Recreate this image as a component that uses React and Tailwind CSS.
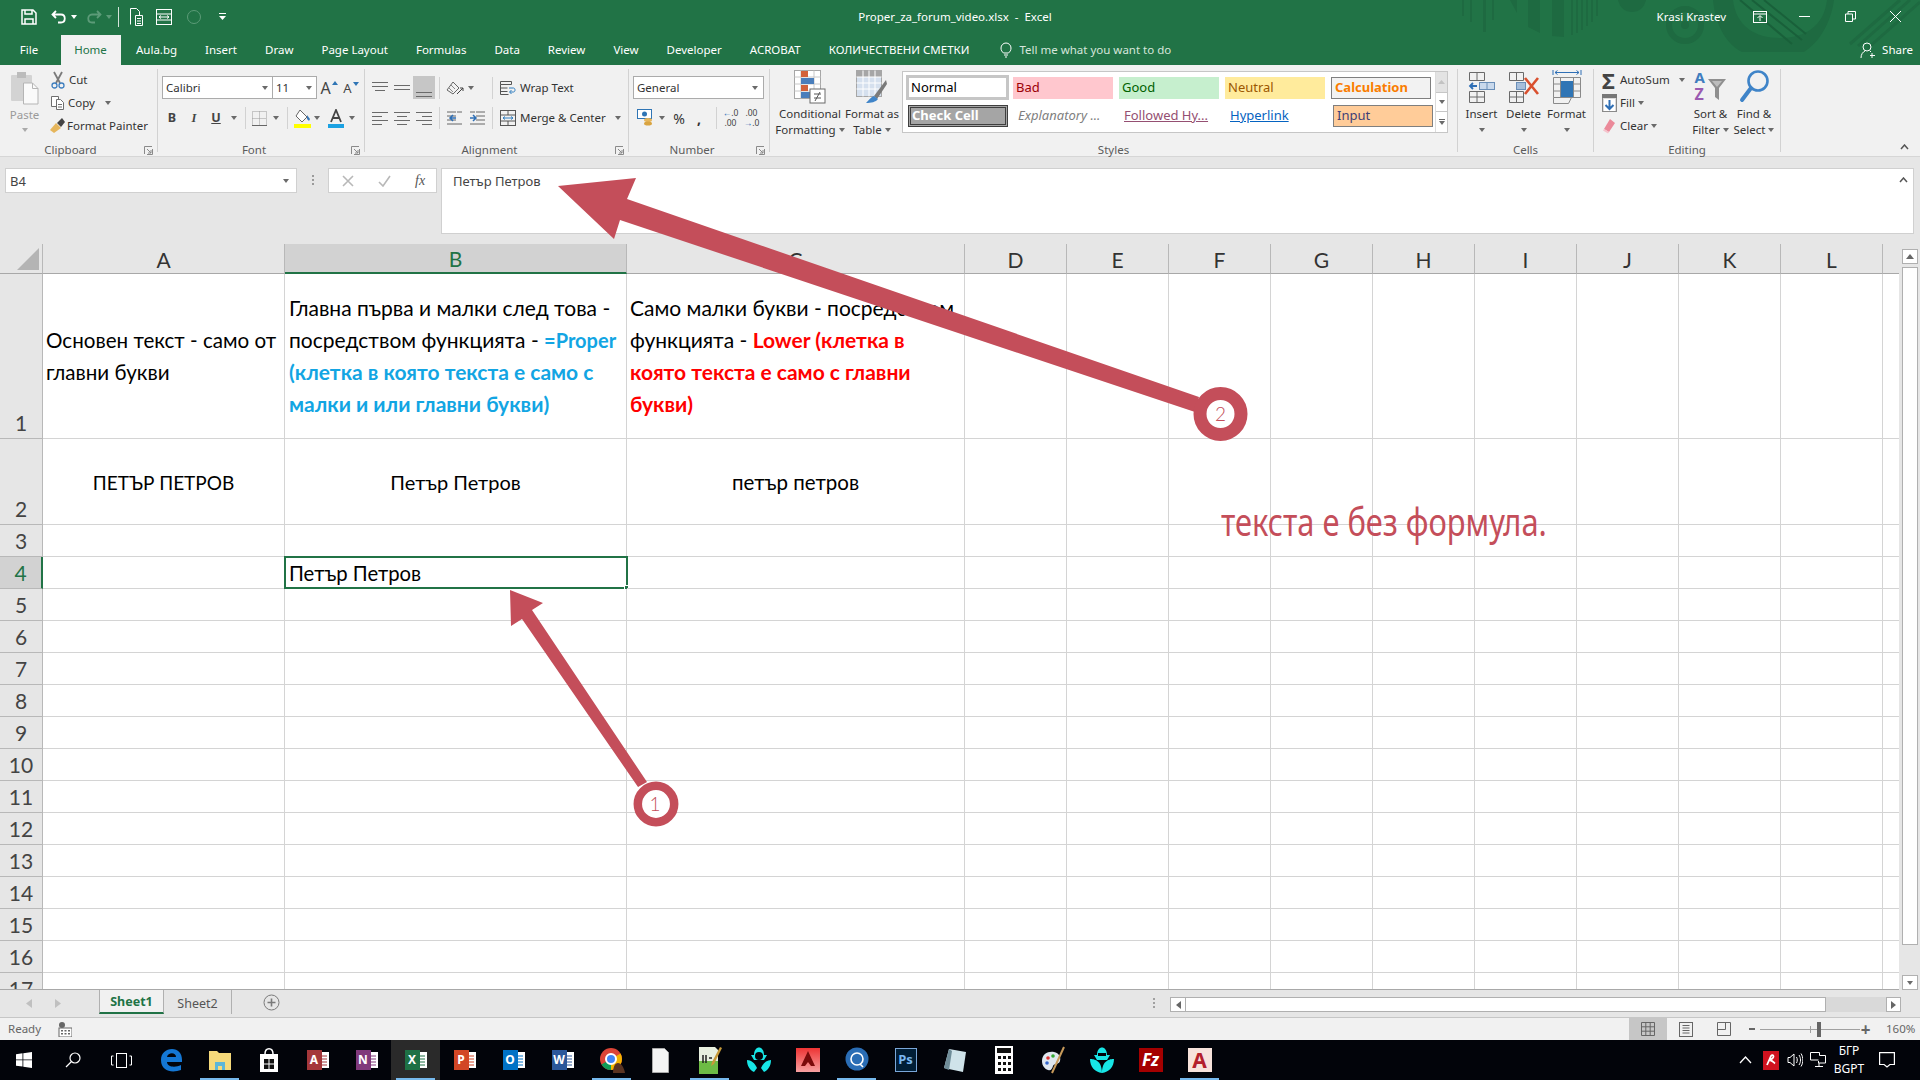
import React from 'react';

const GRID_COLS = ['w-[242px]', 'w-[342px]', 'w-[338px]', 'w-[102px]', 'w-[102px]', 'w-[102px]', 'w-[102px]', 'w-[102px]', 'w-[102px]', 'w-[102px]', 'w-[102px]', 'w-[102px]', 'w-[16px]'];
const COL_LABELS = ['A', 'B', 'C', 'D', 'E', 'F', 'G', 'H', 'I', 'J', 'K', 'L', ''];

const Caret = ({ c = '#6a6a6a' }) => (
  <svg width="6" height="4" viewBox="0 0 6 4" className="shrink-0"><path d="M0 0h6L3 4z" fill={c} /></svg>
);

const Launcher = () => (
  <svg width="9" height="9" viewBox="0 0 9 9" className="shrink-0">
    <path d="M.5 8V.5H8M8.5 3v5.5H3" fill="none" stroke="#8a8a8a" />
    <path d="M3 3l4 4M7 4v3H4" fill="none" stroke="#8a8a8a" />
  </svg>
);

const GroupSep = () => <div className="w-px my-[4px] bg-[#d2d2d2] shrink-0" />;
const MiniSep = () => <div className="w-px h-[22px] bg-[#d2d2d2] shrink-0" />;

function Group({ w, label, launcher, children }) {
  return (
    <div className={`${w} shrink-0 flex flex-col h-full`}>
      <div className="h-[76px] shrink-0">{children}</div>
      <div className="relative flex-1 flex items-center justify-center text-[#5b5b5b] text-[11.5px] pb-[4px]">
        {label}
        {launcher && <span className="absolute right-[4px] top-[5px]"><Launcher /></span>}
      </div>
    </div>
  );
}

// ----- ribbon drawings
const PasteIcon = () => (
  <svg width="30" height="34" viewBox="0 0 30 34">
    <rect x="1" y="4" width="21" height="26" rx="1" fill="#d3d3d3" />
    <rect x="7" y="1" width="9" height="6" fill="#bcbcbc" />
    <path d="M13.500 12h9l5.500 5.500V33h-14.500z" fill="#fafafa" stroke="#b5b5b5" />
    <path d="M22.500 12v5.500H28" fill="none" stroke="#b5b5b5" />
  </svg>
);
const CutIcon = () => (
  <svg width="16" height="18" viewBox="0 0 16 18" fill="none">
    <path d="M4 1l6 11M12 1L6 12" stroke="#7a7a7a" strokeWidth="1.800" />
    <circle cx="4.500" cy="14.500" r="2.500" stroke="#3f7fbf" strokeWidth="1.300" />
    <circle cx="11.500" cy="14.500" r="2.500" stroke="#3f7fbf" strokeWidth="1.300" />
  </svg>
);
const CopyIcon = () => (
  <svg width="15" height="15" viewBox="0 0 15 15" fill="#fff" stroke="#6e6e6e">
    <path d="M1.500 1.500h7v10h-7z" />
    <path d="M6.500 4.500h4l3 3v7h-7z" />
    <path d="M8 9.500h4M8 12h4" />
  </svg>
);
const PainterIcon = () => (
  <svg width="17" height="17" viewBox="0 0 17 17">
    <path d="M1 13l6-7 5 5-7 5z" fill="#e6b65c" />
    <path d="M8 6l4 4 4-5-3-4z" fill="#444" />
  </svg>
);
const Lines = ({ rows }) => (
  <svg width="16" height="14" viewBox="0 0 16 14" stroke="#6a6a6a" strokeWidth="1">
    {rows.map((r, i) => <path key={i} d={r} />)}
  </svg>
);
const OrientIcon = () => (
  <svg width="18" height="16" viewBox="0 0 18 16" fill="none" stroke="#666">
    <path d="M1 10l6-8 6 6-6 6z" />
    <path d="M3 8l4 4M5 5l4 4" stroke="#888" />
    <path d="M11 14l6-6M17 8h-3M17 8v3" stroke="#444" />
  </svg>
);
const WrapIcon = () => (
  <svg width="16" height="16" viewBox="0 0 16 16" fill="none" stroke="#555">
    <path d="M.5 1.500h11v3h-11zM.5 4.500v10h8M.5 8h7M.5 11.500h7" />
    <path d="M9 8h4.500c2 0 2 4 0 4H10M11.500 10l-2 2 2 2" stroke="#2f7dbf" />
  </svg>
);
const MergeIcon = () => (
  <svg width="16" height="16" viewBox="0 0 16 16" fill="none" stroke="#555">
    <rect x=".5" y=".5" width="15" height="15" />
    <path d="M.5 5h15M.5 11h15M8 .5V5M8 11v4.500" />
    <path d="M3 8h10M5 6.500L3 8l2 1.500M11 6.500L13 8l-2 1.500" stroke="#2f7dbf" />
  </svg>
);
const IndentIcon = ({ flip }) => (
  <svg width="16" height="14" viewBox="0 0 16 14" fill="none">
    <path d="M7 1h9M7 5h9M7 9h9M1 13h15M1 1h5" stroke="#666" transform={flip ? 'translate(16,0) scale(-1,1)' : undefined} />
    <path d={flip ? 'M9 7h-6M6 4L3 7l3 3' : 'M7 7H1M4 4l3 3-3 3'} stroke="#2f6fb5" strokeWidth="1.500" />
  </svg>
);
const BorderIcon = () => (
  <svg width="15" height="15" viewBox="0 0 15 15" fill="none" stroke="#9a9a9a" strokeDasharray="1 1">
    <path d="M.5.5h14v14H.5zM7.500 .5v14M.5 7.500h14" />
    <path d="M0 14.500h15" stroke="#666" strokeDasharray="0" />
  </svg>
);
const FillIcon = () => (
  <svg width="17" height="19" viewBox="0 0 17 19">
    <path d="M6 1l7 7-5 5-6-6z" fill="#fff" stroke="#666" />
    <path d="M13 6l3 4-1 2-2-2z" fill="#3a78b8" />
    <rect x="0" y="15" width="17" height="4" fill="#ffff00" />
  </svg>
);
const FontColorIcon = () => (
  <svg width="16" height="19" viewBox="0 0 16 19">
    <path d="M3 13L8 1l5 12M5 9h6" fill="none" stroke="#444" strokeWidth="1.800" />
    <rect x="0" y="15" width="16" height="4" fill="#1ba1e2" />
  </svg>
);
const CurrencyIcon = () => (
  <svg width="17" height="18" viewBox="0 0 17 18">
    <rect x=".5" y=".5" width="14" height="9" fill="#fff" stroke="#2f75b5" />
    <circle cx="7.500" cy="5" r="2.500" fill="#2f75b5" />
    <ellipse cx="11" cy="11" rx="4" ry="2" fill="#e6b65c" />
    <ellipse cx="11" cy="14.500" rx="4" ry="2" fill="#d9a441" />
  </svg>
);
const CondIcon = () => (
  <svg width="32" height="34" viewBox="0 0 32 34">
    <rect x=".5" y=".5" width="26" height="28" fill="#fff" stroke="#a6a6a6" />
    <path d="M7 .5v28M20 .5v28M.5 7h26M.5 14h26M.5 21h26" stroke="#c8c8c8" />
    <rect x="7" y="1" width="7" height="6" fill="#d2623a" />
    <rect x="7" y="8" width="13" height="6" fill="#4a7ebb" />
    <rect x="7" y="15" width="7" height="6" fill="#d2623a" />
    <rect x="7" y="22" width="10" height="6" fill="#4a7ebb" />
    <rect x="16" y="19" width="15" height="14" fill="#fff" stroke="#6a6a6a" />
    <path d="M20 24h7M20 28h7M26 22l-5 9" stroke="#555" />
  </svg>
);
const TableIcon = () => (
  <svg width="32" height="34" viewBox="0 0 32 34">
    <rect x=".5" y=".5" width="25" height="26" fill="#d5e0ee" stroke="#a6a6a6" />
    <rect x="1" y="1" width="24" height="6" fill="#a6a6a6" />
    <path d="M7 .5v26M13 .5v26M19 .5v26M.5 7h25M.5 13h25M.5 19h25" stroke="#fff" />
    <path d="M30 10L18 26l3 3 10-15z" fill="#7a7a7a" />
    <path d="M18 26c-3 1-5 4-8 7 5 0 10-1 12-4z" fill="#3f84c8" />
  </svg>
);
const InsertCellsIcon = () => (
  <svg width="28" height="34" viewBox="0 0 28 34" fill="none" stroke="#6a6a6a">
    <path d="M1.500 2.500h15v8h-15zM9 2.500v8M1.500 21.500h15v11h-15zM9 21.500v11M1.500 27h15" />
    <rect x="11.500" y="12.500" width="15" height="7" fill="#c9d9ec" stroke="#6a8fb8" />
    <path d="M19 12.500v7" stroke="#6a8fb8" />
    <path d="M9 16H2M5 13l-3 3 3 3" stroke="#2f6fb5" strokeWidth="1.800" />
  </svg>
);
const DeleteCellsIcon = () => (
  <svg width="32" height="34" viewBox="0 0 32 34" fill="none" stroke="#6a6a6a">
    <path d="M1.500 2.500h14v8h-14zM8.500 2.500v8M1.500 21.500h14v11h-14zM8.500 21.500v11M1.500 27h14" />
    <rect x="8.500" y="12.500" width="9" height="7" fill="#a6bedb" stroke="#6a8fb8" />
    <path d="M17 8l13 16M30 8L17 24" stroke="#d9502e" strokeWidth="2.600" />
  </svg>
);
const FormatCellsIcon = () => (
  <svg width="30" height="36" viewBox="0 0 30 36" fill="none" stroke="#6a6a6a">
    <path d="M1 1v5M29 1v5M3 3.500h24M3 3.500l2.500-2M3 3.500l2.500 2M27 3.500l-2.500-2M27 3.500l-2.500 2" stroke="#2f6fb5" />
    <path d="M1.500 8.500h27v20h-27zM8.500 8.500v20M21.500 8.500v20M1.500 15h27M1.500 22h27" stroke="#8a8a8a" />
    <rect x="9" y="12" width="12" height="16" fill="#2f75b5" stroke="none" />
    <path d="M1.500 28.500v6h15l3-6" stroke="#8a8a8a" />
  </svg>
);
const FillDownIcon = () => (
  <svg width="15" height="18" viewBox="0 0 15 18">
    <rect x=".5" y=".5" width="14" height="17" fill="#dcdcdc" stroke="#8a8a8a" />
    <rect x="0" y="0" width="15" height="4" fill="#777" />
    <rect x="2" y="5" width="11" height="12" fill="#fff" />
    <path d="M7.500 6v9M3.500 11l4 4 4-4" fill="none" stroke="#2f6fb5" strokeWidth="2" />
  </svg>
);
const EraserIcon = () => (
  <svg width="14" height="16" viewBox="0 0 14 16">
    <path d="M8 1l5 4-6 9-5-3z" fill="#eb8a9a" />
    <path d="M2 11l5 3-1 1.500-5-3z" fill="#f6c3cc" />
  </svg>
);
const SortIcon = () => (
  <div className="w-[32px] h-[36px] flex font-bold leading-[17px]">
    <div className="w-[12px] flex flex-col items-start">
      <span className="text-[15px] text-[#3f7dbf]">A</span>
      <span className="text-[16px] text-[#9a5ab0]">Z</span>
    </div>
    <svg className="mt-[9px]" width="20" height="22" viewBox="0 0 20 22">
      <path d="M1 1h18l-7 9v12l-4-3v-9z" fill="#8f8f8f" />
      <path d="M5 3h10l-5 6z" fill="#bdbdbd" />
    </svg>
  </div>
);
const FindIcon = () => (
  <svg width="30" height="36" viewBox="0 0 30 36" fill="none">
    <circle cx="19" cy="12" r="9.500" stroke="#3f84c8" strokeWidth="2.600" />
    <path d="M12 19L3 31" stroke="#3f84c8" strokeWidth="4" strokeLinecap="round" />
  </svg>
);

function TopButton({ w, lines, caretOnLine, children }) {
  return (
    <div className={`${w} shrink-0 flex flex-col items-center`}>
      <div className="h-[38px] flex items-center justify-center">{children}</div>
      <div className="flex items-center gap-[3px] h-[16px] whitespace-nowrap">{lines[0]}{caretOnLine === 0 && <Caret />}</div>
      <div className="flex items-center gap-[3px] h-[16px] whitespace-nowrap">{lines[1]}{caretOnLine === 1 && <Caret />}</div>
    </div>
  );
}

function StyleCell({ className, children }) {
  return <div className={`w-[100px] h-[22px] shrink-0 flex items-center pl-[3px] text-[13px] whitespace-nowrap ${className}`}>{children}</div>;
}

function Ribbon() {
  return (
    <div className="h-[92px] shrink-0 bg-[#f1f1f1] border-b border-[#d6d6d6] flex text-[#333] text-[11.500px]">
      <Group w="w-[157px]" label={<span className="mr-[16px]">Clipboard</span>} launcher>
        <div className="flex">
          <div className="w-[50px] flex flex-col items-center pt-[6px] pr-[1px]">
            <PasteIcon />
            <span className="text-[#9a9a9a] mt-[2px] leading-[16px]">Paste</span>
            <span className="mt-[5px]"><Caret c="#aaa" /></span>
          </div>
          <div className="flex flex-col pt-[3px]">
            <div className="h-[23px] flex items-center gap-[3px]"><CutIcon />Cut</div>
            <div className="h-[23px] flex items-center gap-[3px]"><CopyIcon />Copy<span className="ml-[7px]"><Caret /></span></div>
            <div className="h-[23px] flex items-center gap-[1px] ml-[-1px] whitespace-nowrap"><PainterIcon />Format Painter</div>
          </div>
        </div>
      </Group>
      <GroupSep />
      <Group w="w-[206px]" label={<span className="mr-[14px]">Font</span>} launcher>
        <div className="pt-[11px]">
          <div className="flex items-center h-[23px] pl-[4px]">
            <div className="w-[111px] h-[23px] bg-white border border-[#ababab] flex items-center justify-between pl-[3px] pr-[4px]">Calibri<Caret /></div>
            <div className="w-[44px] h-[23px] bg-white border border-l-0 border-[#ababab] flex items-center justify-between pl-[3px] pr-[4px]">11<Caret /></div>
            <div className="w-[22px] ml-[1px] flex items-start justify-center text-[16px] text-[#444] leading-none">
              A<svg className="mt-[1px] ml-[1px]" width="6" height="4"><path d="M0 4l3-4 3 4z" fill="#2f75b5" /></svg>
            </div>
            <div className="w-[22px] flex items-start justify-center text-[13px] text-[#444] leading-none pt-[2px]">
              A<svg className="ml-[1px]" width="6" height="4"><path d="M0 0h6L3 4z" fill="#2f75b5" /></svg>
            </div>
          </div>
          <div className="flex items-center h-[22px] mt-[8px] pl-[3px] text-[#444]">
            <span className="w-[22px] text-center font-bold text-[12.500px]">B</span>
            <span className="w-[22px] text-center italic font-bold text-[12.500px] font-['Liberation_Serif',serif]">I</span>
            <span className="w-[22px] text-center underline font-bold text-[12.500px]">U</span>
            <span className="w-[12px] ml-[1px] flex justify-center"><Caret /></span>
            <span className="ml-[5px]"><MiniSep /></span>
            <span className="w-[22px] ml-[2px] flex justify-center"><BorderIcon /></span>
            <span className="w-[12px] flex justify-center"><Caret /></span>
            <span className="ml-[5px]"><MiniSep /></span>
            <span className="w-[22px] ml-[3px] flex justify-center"><FillIcon /></span>
            <span className="w-[8px] flex justify-center"><Caret /></span>
            <span className="w-[22px] ml-[4px] flex justify-center"><FontColorIcon /></span>
            <span className="w-[10px] flex justify-center"><Caret /></span>
          </div>
        </div>
      </Group>
      <GroupSep />
      <Group w="w-[263px]" label={<span className="mr-[14px]">Alignment</span>} launcher>
        <div className="pt-[11px]">
          <div className="flex items-center h-[23px] pl-[4px]">
            <span className="w-[22px] flex justify-center"><Lines rows={['M0 1.500h16', 'M0 5.500h16', 'M3 9.500h10']} /></span>
            <span className="w-[22px] flex justify-center"><Lines rows={['M0 4.500h16', 'M0 8.500h16']} /></span>
            <span className="w-[22px] h-[23px] bg-[#c6c6c6] flex items-end justify-center pb-[1px]"><Lines rows={['M0 8.500h16', 'M0 12.500h16']} /></span>
            <span className="ml-[4px]"><MiniSep /></span>
            <span className="w-[22px] ml-[4px] flex justify-center"><OrientIcon /></span>
            <span className="w-[10px] flex justify-center"><Caret /></span>
            <span className="ml-[16px]"><MiniSep /></span>
            <span className="ml-[7px] mr-[4px]"><WrapIcon /></span>
            <span>Wrap Text</span>
          </div>
          <div className="flex items-center h-[22px] mt-[8px] pl-[4px]">
            <span className="w-[22px] flex justify-center"><Lines rows={['M0 1.500h16', 'M0 5.500h10', 'M0 9.500h16', 'M0 13.500h10']} /></span>
            <span className="w-[22px] flex justify-center"><Lines rows={['M0 1.500h16', 'M3 5.500h10', 'M0 9.500h16', 'M3 13.500h10']} /></span>
            <span className="w-[22px] flex justify-center"><Lines rows={['M0 1.500h16', 'M6 5.500h10', 'M0 9.500h16', 'M6 13.500h10']} /></span>
            <span className="ml-[4px]"><MiniSep /></span>
            <span className="w-[22px] ml-[4px] flex justify-center"><IndentIcon flip /></span>
            <span className="w-[22px] flex justify-center"><IndentIcon /></span>
            <span className="ml-[4px]"><MiniSep /></span>
            <span className="ml-[7px] mr-[4px]"><MergeIcon /></span>
            <span>Merge &amp; Center</span>
            <span className="ml-[9px]"><Caret /></span>
          </div>
        </div>
      </Group>
      <GroupSep />
      <Group w="w-[140px]" label={<span className="mr-[14px]">Number</span>} launcher>
        <div className="pt-[11px] pl-[4px]">
          <div className="w-[131px] h-[23px] bg-white border border-[#ababab] flex items-center justify-between pl-[3px] pr-[5px]">General<Caret /></div>
          <div className="flex items-center h-[22px] mt-[8px] pl-[3px]">
            <span className="w-[18px] flex justify-center"><CurrencyIcon /></span>
            <span className="w-[16px] flex justify-center"><Caret /></span>
            <span className="w-[18px] text-center text-[14px]">%</span>
            <span className="w-[22px] text-center font-bold text-[14px]">,</span>
            <span className="ml-[6px]"><MiniSep /></span>
            <span className="w-[21px] ml-[3px] text-center text-[8.500px] leading-[10px] text-[#444]"><span className="text-[#2f6fb5]">←</span>.0<br />.00</span>
            <span className="w-[21px] text-center text-[8.500px] leading-[10px] text-[#444]">.00<br /><span className="text-[#2f6fb5]">→</span>.0</span>
          </div>
        </div>
      </Group>
      <GroupSep />
      <Group w="w-[687px]" label="Styles">
        <div className="flex h-full">
          <div className="flex pt-[3px] pl-[8px] w-[132px] shrink-0 leading-none">
            <TopButton w="w-[64px]" lines={['Conditional', 'Formatting']} caretOnLine={1}><CondIcon /></TopButton>
            <TopButton w="w-[60px]" lines={['Format as', 'Table']} caretOnLine={1}><TableIcon /></TopButton>
          </div>
          <div className="mt-[6px] w-[546px] h-[62px] bg-white border border-[#c6c6c6] flex shrink-0">
            <div className="w-[532px] pl-[3px] shrink-0 flex flex-col">
              <div className="flex items-center gap-[6px] h-[31px]">
                <div className="w-[103px] h-[25px] shrink-0 border-[3px] border-[#c6c6c6] flex items-center pl-[2px] text-[13px] text-black">Normal</div>
                <StyleCell className="ml-[-2px] bg-[#ffc7ce] text-[#9c0006]">Bad</StyleCell>
                <StyleCell className="bg-[#c6efce] text-[#006100]">Good</StyleCell>
                <StyleCell className="bg-[#ffeb9c] text-[#9c5700]">Neutral</StyleCell>
                <StyleCell className="bg-[#f2f2f2] border border-[#7f7f7f] text-[#fa7d00] font-bold">Calculation</StyleCell>
              </div>
              <div className="flex items-center gap-[6px] h-[25px]">
                <div className="w-[100px] h-[22px] ml-[2px] shrink-0 bg-[#a5a5a5] border-[3px] border-double border-[#3f3f3f] flex items-center pl-[1px] text-[13px] font-bold text-white">Check Cell</div>
                <StyleCell className="ml-[1px] italic text-[#7f7f7f]">Explanatory ...</StyleCell>
                <StyleCell className="text-[#954f72]"><span className="underline">Followed Hy...</span></StyleCell>
                <StyleCell className="text-[#0563c1]"><span className="underline">Hyperlink</span></StyleCell>
                <StyleCell className="bg-[#ffcc99] border border-[#7f7f7f] text-[#3f3f76]">Input</StyleCell>
              </div>
            </div>
            <div className="flex-1 flex flex-col border-l border-[#dcdcdc]">
              <div className="h-[20px] bg-[#e3e3e3] flex items-center justify-center"><svg width="7" height="4"><path d="M0 4l3.500-4L7 4z" fill="#c2c2c2" /></svg></div>
              <div className="h-[20px] border-y border-[#c6c6c6] flex items-center justify-center"><Caret /></div>
              <div className="flex-1 flex flex-col items-center justify-center gap-[1px]"><div className="w-[6px] h-px bg-[#666]" /><Caret /></div>
            </div>
          </div>
        </div>
      </Group>
      <GroupSep />
      <Group w="w-[135px]" label="Cells">
        <div className="flex pt-[3px] pl-[3px] leading-none">
          <div className="w-[41px] shrink-0"><TopButton w="w-[41px]" lines={['Insert', <Caret key="c" />]}><InsertCellsIcon /></TopButton></div>
          <div className="w-[43px] shrink-0"><TopButton w="w-[43px]" lines={['Delete', <Caret key="c" />]}><DeleteCellsIcon /></TopButton></div>
          <div className="w-[43px] shrink-0"><TopButton w="w-[43px]" lines={['Format', <Caret key="c" />]}><FormatCellsIcon /></TopButton></div>
        </div>
      </Group>
      <GroupSep />
      <Group w="w-[186px]" label="Editing">
        <div className="flex">
          <div className="w-[95px] shrink-0 flex flex-col pt-[3px] pl-[8px]">
            <div className="h-[23px] flex items-center"><span className="w-[18px] text-[22px] leading-none text-[#444] font-bold">Σ</span>AutoSum<span className="ml-[9px]"><Caret /></span></div>
            <div className="h-[23px] flex items-center"><span className="w-[18px]"><FillDownIcon /></span>Fill<span className="ml-[3px]"><Caret /></span></div>
            <div className="h-[23px] flex items-center"><span className="w-[18px]"><EraserIcon /></span>Clear<span className="ml-[3px]"><Caret /></span></div>
          </div>
          <div className="flex pt-[3px] leading-none">
            <TopButton w="w-[43px]" lines={['Sort &', 'Filter']} caretOnLine={1}><SortIcon /></TopButton>
            <TopButton w="w-[44px]" lines={['Find &', 'Select']} caretOnLine={1}><FindIcon /></TopButton>
          </div>
        </div>
      </Group>
      <GroupSep />
      <div className="flex-1 flex items-end justify-end pr-[11px] pb-[6px]">
        <svg width="9" height="6" viewBox="0 0 9 6"><path d="M1 5l3.500-4L8 5" fill="none" stroke="#555" strokeWidth="1.500" /></svg>
      </div>
    </div>
  );
}

function TitleDecor() {
  return (
    <svg className="absolute right-0 top-0" width="480" height="65" viewBox="0 0 480 65" fill="#1e6a41">
      <rect x="22" y="0" width="2" height="16" /><rect x="30" y="0" width="2" height="22" /><rect x="43" y="0" width="3" height="32" /><rect x="52" y="0" width="2" height="20" />
      <path d="M70 0h7l0 13z" />
      <path d="M88 0h12v33l-12-6z" />
      <path d="M112 0h12v37l-12-1z" />
      <rect x="131" y="0" width="2" height="35" /><rect x="136" y="0" width="2" height="33" /><rect x="141" y="0" width="2" height="30" /><rect x="146" y="0" width="2" height="26" /><rect x="151" y="0" width="2" height="22" /><rect x="156" y="0" width="2" height="16" />
      <path d="M178 0h28c-2 8-7 12-14 12s-12-4-14-12z" />
      <circle cx="245" cy="25" r="16" fill="none" stroke="#1e6a41" strokeWidth="6" />
      <circle cx="245" cy="25" r="4" />
      <path d="M273 0h20c3 26 22 38 47 38s44-12 47-38h7c-3 22-14 42-30 52h-62c-17-8-27-30-29-52z" />
      <path d="M300 0l52 44M312 0l50 40M324 0l42 34" stroke="#19603a" strokeWidth="2" />
      <path d="M410 44L460 0M418 46L470 0M428 48L480 2" stroke="#1e6a41" strokeWidth="3" />
    </svg>
  );
}

function TitleBar() {
  return (
    <div className="h-[65px] shrink-0 bg-[#217346] relative text-white">
      <TitleDecor />
      <div className="relative h-[33px] flex items-center text-[11.500px]">
        <div className="flex items-center pl-[21px] w-[300px] shrink-0">
          <svg width="16" height="16" viewBox="0 0 16 16" fill="none" stroke="#fff" strokeWidth="1.500">
            <path d="M1 1h11l3 3v11H1z" /><path d="M4 1v4h7V1M4 15v-5h8v5" />
          </svg>
          <svg className="ml-[14px]" width="16" height="14" viewBox="0 0 16 14" fill="none" stroke="#fff" strokeWidth="1.800">
            <path d="M5 1L1.500 4.500 5 8M2 4.500h8c5 0 5 8 0 8H7" />
          </svg>
          <span className="ml-[4px]"><Caret c="#fff" /></span>
          <svg className="ml-[9px]" width="16" height="14" viewBox="0 0 16 14" fill="none" stroke="#5c9b78" strokeWidth="1.800">
            <path d="M11 1l3.500 3.500L11 8M14 4.500H6c-5 0-5 8 0 8h3" />
          </svg>
          <span className="ml-[4px]"><Caret c="#5c9b78" /></span>
          <div className="ml-[6px] w-px h-[20px] bg-[#d5e4db]" />
          <svg className="ml-[10px]" width="14" height="18" viewBox="0 0 14 18" fill="none" stroke="#fff">
            <path d="M1.500 16.500V.5h6l3 3V7" /><path d="M6.500 7.500h7v10h-7zM8 10.500h4M8 13h4M8 15.500h4" />
          </svg>
          <svg className="ml-[13px]" width="16" height="16" viewBox="0 0 16 16" fill="none" stroke="#fff">
            <rect x=".5" y=".5" width="15" height="15" /><path d="M.5 5h15M.5 11h15M3 8h10M5 6.500L3 8l2 1.500M11 6.500L13 8l-2 1.500" />
          </svg>
          <svg className="ml-[15px]" width="14" height="14" viewBox="0 0 14 14" fill="none" stroke="#5c9b78"><circle cx="7" cy="7" r="6.500" /></svg>
          <svg className="ml-[18px]" width="7" height="8" viewBox="0 0 7 8" fill="#fff"><path d="M0 0h7v1H0zM0 3h7L3.500 7z" /></svg>
        </div>
        <div className="flex-1 text-center mr-[20px] whitespace-pre">{'Proper_za_forum_video.xlsx  -  Excel'}</div>
        <div className="flex items-center w-[290px] shrink-0">
          <span className="w-[96px] text-right shrink-0">Krasi Krastev</span>
          <svg className="ml-[27px]" width="14" height="12" viewBox="0 0 14 12" fill="none" stroke="#fff"><rect x=".5" y=".5" width="13" height="11" /><path d="M.5 3h13M7 10V5M4.500 7L7 4.500 9.500 7" /></svg>
          <svg className="ml-[32px]" width="11" height="1"><rect width="11" height="1" fill="#fff" /></svg>
          <svg className="ml-[35px]" width="11" height="11" viewBox="0 0 11 11" fill="none" stroke="#fff"><path d="M.5 3h7v7.500h-7zM3 3V.5h7.500V8H8" /></svg>
          <svg className="ml-[34px]" width="11" height="11" viewBox="0 0 11 11" fill="none" stroke="#fff"><path d="M0 0l11 11M11 0L0 11" /></svg>
        </div>
      </div>
      <div className="relative h-[32px] flex items-end">
        <div className="w-[61px] h-[30px] flex items-center justify-center pr-[3px]">File</div>
        <div className="w-[60px] h-[30px] bg-[#f1f1f1] text-[#217346] flex items-center justify-center pr-[1px]">Home</div>
        <div className="flex items-center h-[30px] pl-[15px] gap-[28px] whitespace-nowrap">
          <span>Aula.bg</span><span>Insert</span><span>Draw</span><span>Page Layout</span><span>Formulas</span><span>Data</span><span>Review</span><span>View</span><span>Developer</span><span>ACROBAT</span><span>КОЛИЧЕСТВЕНИ СМЕТКИ</span>
        </div>
        <div className="flex items-center h-[30px] ml-[31px] text-[#d6e6dc]">
          <svg width="12" height="16" viewBox="0 0 12 16" fill="none" stroke="#fff"><path d="M3.500 11C2 9.500 1 8.500 1 6a5 5 0 0110 0c0 2.500-1 3.500-2.500 5zM4 13h4M5 15h2" /></svg>
          <span className="ml-[7px]">Tell me what you want to do</span>
        </div>
        <div className="flex items-center h-[30px] ml-auto pr-[7px]">
          <svg width="17" height="17" viewBox="0 0 17 17" fill="none" stroke="#fff"><circle cx="7" cy="5" r="4" /><path d="M1 16c0-4 2-6 4-7M10 9l1 1M12 11v5M10 13.500h5" /></svg>
          <span className="ml-[5px]">Share</span>
        </div>
      </div>
    </div>
  );
}

function FormulaBar() {
  return (
    <div className="h-[87px] shrink-0 bg-[#e6e6e6] pt-[11px] pl-[5px] flex items-start text-[#444] text-[13px]">
      <div className="w-[292px] h-[25px] bg-white border border-[#d0d0d0] flex items-center justify-between pl-[4px] pr-[7px]"><span className="pt-[2px]">B4</span><Caret /></div>
      <div className="w-[31px] h-[25px] flex items-center justify-center">
        <svg width="2" height="11"><path d="M0 0h2v2H0zM0 4h2v2H0zM0 8h2v2H0z" fill="#9a9a9a" /></svg>
      </div>
      <div className="w-[109px] h-[25px] bg-white border border-[#d0d0d0] flex items-center pl-[13px]">
        <svg width="12" height="12" viewBox="0 0 12 12"><path d="M1 1l10 10M11 1L1 11" stroke="#b8b8b8" strokeWidth="1.600" /></svg>
        <svg className="ml-[24px]" width="13" height="12" viewBox="0 0 13 12"><path d="M1 7l4 4 7-10" fill="none" stroke="#b8b8b8" strokeWidth="1.600" /></svg>
        <span className="ml-[24px] italic text-[14px] text-[#555] font-['Liberation_Serif',serif]">fx</span>
      </div>
      <div className="ml-[4px] w-[1473px] h-[66px] bg-white border border-[#d0d0d0] flex items-start justify-between pt-[3px] pl-[11px] pr-[5px]">
        <span>Петър Петров</span>
        <svg className="mt-[5px]" width="9" height="6" viewBox="0 0 9 6"><path d="M1 5l3.500-4L8 5" fill="none" stroke="#555" strokeWidth="1.500" /></svg>
      </div>
    </div>
  );
}

const CELLS = {
  '1-0': <span className="text-[20.600px]">Основен текст - само от<br />главни букви</span>,
  '1-1': <>Главна първа и малки след това -<br />посредством функцията - <b className="text-[#12a5e3] text-[20px]">=Proper</b><br /><b className="text-[#12a5e3]">(клетка в която текста е само с</b><br /><b className="text-[#12a5e3]">малки и или главни букви)</b></>,
  '1-2': <>Само малки букви - посредством<br />функцията - <b className="text-[#ff0000]">Lower (клетка в</b><br /><b className="text-[#ff0000]">която текста е само с главни</b><br /><b className="text-[#ff0000]">букви)</b></>,
};
const CENTER = {
  '2-0': <span className="text-[19px]">ПЕТЪР ПЕТРОВ</span>,
  '2-1': <span className="text-[20px]">Петър Петров</span>,
  '2-2': <span className="text-[20.500px]">петър петров</span>,
};

function Row({ n }) {
  const h = n === 1 ? 'h-[165px]' : n === 2 ? 'h-[86px]' : 'h-[32px]';
  return (
    <div className={`flex ${h} shrink-0`}>
      <div className={`w-[43px] shrink-0 border-r border-b border-[#b8b8b8] flex items-end justify-center pb-[1px] text-[21px] leading-[28px] ${n === 4 ? 'bg-[#d2d2d2] text-[#217346] border-r-2 border-r-[#217346]' : 'bg-[#e6e6e6] text-[#444]'}`}>{n}</div>
      {GRID_COLS.map((w, i) => {
        const key = `${n}-${i}`;
        return (
          <div key={i} className={`${w} shrink-0 relative border-b border-[#d4d4d4] ${i < 12 ? 'border-r' : ''} border-r-[#d4d4d4] text-[21px] text-black leading-[32px] whitespace-nowrap flex items-center`}>
            {CELLS[key] && <div className={`${i === 1 ? 'pl-[4px]' : 'pl-[3px]'} pb-[1px]`}>{CELLS[key]}</div>}
            {CENTER[key] && <div className="w-full text-center pt-[1px]">{CENTER[key]}</div>}
            {n === 4 && i === 1 && (
              <div className="absolute left-[-1px] top-[-1px] w-[344px] h-[33px] border-2 border-[#217346] pl-[3px] leading-[30px] text-[20.300px]">
                Петър Петров
                <span className="absolute right-[-3px] bottom-[-3px] w-[5px] h-[5px] bg-[#217346] border border-white" />
              </div>
            )}
          </div>
        );
      })}
    </div>
  );
}

function Sheet() {
  const rows = [];
  for (let n = 1; n <= 17; n++) rows.push(<Row key={n} n={n} />);
  return (
    <div className="h-[746px] shrink-0 flex bg-white overflow-hidden">
      <div className="w-[1899px] shrink-0 h-[746px] overflow-hidden border-b border-[#a8a8a8] font-['Lato','Noto_Sans',sans-serif]">
        <div className="flex h-[30px] bg-[#e6e6e6] text-[#333] text-[21px]">
          <div className="w-[43px] shrink-0 border-r border-b border-r-[#b8b8b8] border-b-[#a8a8a8] flex items-end justify-end pr-[3px] pb-[3px]">
            <svg width="22" height="22"><path d="M22 0v22H0z" fill="#b4b4b4" /></svg>
          </div>
          {GRID_COLS.map((w, i) => (
            <div key={i} className={`${w} shrink-0 flex items-center justify-center pt-[2px] ${i === 1 ? 'bg-[#d2d2d2] text-[#217346] border-b-2 border-b-[#217346]' : 'border-b border-b-[#a8a8a8]'} ${i < 12 ? 'border-r border-r-[#b8b8b8]' : ''}`}>{COL_LABELS[i]}</div>
          ))}
        </div>
        {rows}
      </div>
      <div className="flex-1 bg-[#e6e6e6] flex flex-col items-center">
        <div className="w-[16px] h-[15px] mt-[5px] bg-white border border-[#b0b0b0] flex items-center justify-center"><svg width="8" height="5"><path d="M0 5l4-5 4 5z" fill="#666" /></svg></div>
        <div className="w-[16px] h-[678px] mt-[3px] bg-white border border-[#b0b0b0]" />
        <div className="flex-1" />
        <div className="w-[16px] h-[15px] bg-white border border-[#b0b0b0] flex items-center justify-center"><Caret /></div>
      </div>
    </div>
  );
}

function SheetTabs() {
  return (
    <div className="h-[28px] shrink-0 bg-[#e6e6e6] flex items-start border-b border-[#c6c6c6] text-[12.500px] relative">
      <svg className="ml-[26px] mt-[9px]" width="6" height="9"><path d="M6 0v9L0 4.500z" fill="#c0c0c0" /></svg>
      <svg className="ml-[23px] mt-[9px]" width="6" height="9"><path d="M0 0v9l6-4.500z" fill="#c0c0c0" /></svg>
      <div className="ml-[38px] w-[65px] h-[24px] pt-[3px] bg-[#f1f1f1] border-x border-[#b0b0b0] border-b-2 border-b-[#217346] flex items-center justify-center font-bold text-[#217346]">Sheet1</div>
      <div className="w-[68px] h-[24px] pt-[4px] flex items-center justify-center text-[#555] border-r border-[#b0b0b0]">Sheet2</div>
      <svg className="ml-[31px] mt-[4px]" width="17" height="17" viewBox="0 0 17 17" fill="none" stroke="#7a7a7a"><circle cx="8.500" cy="8.500" r="7.500" /><path d="M8.500 4.500v8M4.500 8.500h8" strokeWidth="1.600" /></svg>
      <svg className="ml-[873px] mt-[8px]" width="2" height="11"><path d="M0 0h2v2H0zM0 4h2v2H0zM0 8h2v2H0z" fill="#a0a0a0" /></svg>
      <div className="ml-[15px] mt-[7px] w-[731px] h-[15px] flex bg-[#d9d9d9]">
        <div className="w-[16px] h-[15px] bg-white border border-[#b0b0b0] flex items-center justify-center"><svg width="5" height="8"><path d="M5 0v8L0 4z" fill="#666" /></svg></div>
        <div className="w-[640px] h-[15px] bg-white border border-l-0 border-[#b0b0b0]" />
        <div className="flex-1" />
        <div className="w-[15px] h-[15px] bg-white border border-[#b0b0b0] flex items-center justify-center"><svg width="5" height="8"><path d="M0 0v8l5-4z" fill="#666" /></svg></div>
      </div>
    </div>
  );
}

function StatusBar() {
  return (
    <div className="h-[22px] shrink-0 bg-[#f1f1f1] flex items-center text-[#666] text-[11.500px]">
      <span className="ml-[8px]">Ready</span>
      <svg className="ml-[17px]" width="14" height="15" viewBox="0 0 14 15" fill="#666">
        <circle cx="4" cy="3" r="3" /><rect x="1" y="6" width="13" height="9" fill="#fff" stroke="#666" /><path d="M3 8h2v1.500H3zM6.500 8h2v1.500h-2zM10 8h2v1.500h-2zM3 11h2v1.500H3zM6.500 11h2v1.500h-2zM10 11h2v1.500h-2z" />
      </svg>
      <div className="ml-auto flex items-center h-full">
        <div className="w-[38px] h-full bg-[#c6c6c6] flex items-center justify-center">
          <svg width="14" height="14" viewBox="0 0 14 14" fill="none" stroke="#666"><path d="M.5.5h13v13H.5zM4.800.5v13M9.200.5v13M.5 4.800h13M.5 9.200h13" /></svg>
        </div>
        <div className="w-[38px] flex justify-center">
          <svg width="14" height="15" viewBox="0 0 14 15" fill="none" stroke="#666"><rect x=".5" y=".5" width="13" height="14" /><path d="M3.500 3.500h7M3.500 6h7M3.500 8.500h7M3.500 11h7" /></svg>
        </div>
        <div className="w-[38px] flex justify-center">
          <svg width="14" height="14" viewBox="0 0 14 14" fill="none" stroke="#666"><path d="M.5.500h13v13H.5zM8.500.500v7H.5" /></svg>
        </div>
        <div className="w-[6px] h-[2px] ml-[6px] bg-[#666]" />
        <div className="ml-[5px] w-[100px] h-px bg-[#a0a0a0] relative">
          <div className="absolute left-[50px] top-[-3px] w-px h-[7px] bg-[#a0a0a0]" />
          <div className="absolute left-[57px] top-[-7px] w-[4px] h-[15px] bg-[#666]" />
        </div>
        <span className="ml-[-1px] text-[#666] text-[17px] leading-none font-bold w-[13px] text-center">+</span>
        <span className="ml-[14px] w-[34px]">160%</span>
      </div>
    </div>
  );
}

// ----- taskbar glyphs
const TaskOffice = ({ bg, letter }) => (
  <div className="relative w-[24px] h-[24px]">
    <svg width="24" height="24" viewBox="0 0 24 24">
      <rect x="10" y="4" width="13" height="16" fill="#fff" />
      <path d="M13 8h8M13 11h8M13 14h8M13 17h8" stroke={bg} />
      <rect x="1" y="2" width="15" height="20" fill={bg} />
    </svg>
    <span className="absolute left-[1px] top-[2px] w-[15px] h-[20px] flex items-center justify-center text-[12px] font-bold text-white">{letter}</span>
  </div>
);

function TaskSlot({ active, running, w = 'w-[49px]', children }) {
  return (
    <div className={`${w} shrink-0 h-full relative flex items-center justify-center ${active ? 'bg-[#2a2a2a]' : ''}`}>
      {children}
      {running && <div className="absolute left-[5px] right-[5px] bottom-0 h-[2px] bg-[#76b9ed]" />}
    </div>
  );
}

function Taskbar() {
  return (
    <div className="h-[40px] shrink-0 bg-[#02040a] flex items-center text-white text-[12px]">
      <TaskSlot w="w-[48px]">
        <svg width="16" height="16" viewBox="0 0 16 16" fill="#fff"><path d="M0 2.200l6.500-.9v6.200H0zM7.300 1.200L16 0v7.500H7.300zM0 8.300h6.500v6.300L0 13.700zM7.300 8.300H16V16l-8.700-1.200z" /></svg>
      </TaskSlot>
      <TaskSlot>
        <svg width="16" height="16" viewBox="0 0 16 16" fill="none" stroke="#fff" strokeWidth="1.200"><circle cx="10" cy="6" r="5" /><path d="M6.500 9.500L1 15" /></svg>
      </TaskSlot>
      <TaskSlot>
        <svg width="21" height="15" viewBox="0 0 21 15" fill="none" stroke="#fff"><rect x="5.500" y=".5" width="10" height="14" /><path d="M2.500 3H.5v9h2M18.500 3h2v9h-2" /></svg>
      </TaskSlot>
      <TaskSlot>
        <svg width="22" height="24" viewBox="0 0 22 24"><path d="M1 12C1 5 6 1 12 1c6 0 10 4 10 11v2H7c0 5 8 6 14 3v5c-8 3-20 2-20-10zM7 9h9c0-5-8-5-9 0z" fill="#1477d4" /></svg>
      </TaskSlot>
      <TaskSlot running>
        <svg width="22" height="22" viewBox="0 0 22 22"><path d="M0 2h8l2 2h12v17H0z" fill="#f5d97a" /><rect x="6" y="13" width="10" height="8" fill="#5cb6d8" /><rect x="9" y="17" width="4" height="4" fill="#f5d97a" /></svg>
      </TaskSlot>
      <TaskSlot>
        <svg width="20" height="24" viewBox="0 0 20 24"><path d="M1 6h18v18H1z" fill="#fff" /><path d="M6 6c0-7 8-7 8 0" fill="none" stroke="#fff" strokeWidth="1.500" /><path d="M5 11h4.500v4.500H5zM10.500 11H15v4.500h-4.500zM5 16.500h4.500V21H5zM10.500 16.500H15V21h-4.500z" fill="#111" /></svg>
      </TaskSlot>
      <TaskSlot><TaskOffice bg="#a4373a" letter="A" /></TaskSlot>
      <TaskSlot><TaskOffice bg="#80397b" letter="N" /></TaskSlot>
      <TaskSlot active running><TaskOffice bg="#1e7145" letter="X" /></TaskSlot>
      <TaskSlot><TaskOffice bg="#d24726" letter="P" /></TaskSlot>
      <TaskSlot><TaskOffice bg="#0072c6" letter="O" /></TaskSlot>
      <TaskSlot><TaskOffice bg="#2b579a" letter="W" /></TaskSlot>
      <TaskSlot running>
        <svg width="26" height="26" viewBox="0 0 26 26"><circle cx="12" cy="12" r="11" fill="#db4437" /><path d="M12 12L2.500 17.500A11 11 0 0012 23z" fill="#0f9d58" /><path d="M12 12l9.500-5.500A11 11 0 0112 23z" fill="#f4b400" /><circle cx="12" cy="12" r="5" fill="#4285f4" stroke="#fff" strokeWidth="2" /><path d="M14 26c0-6 2-10 5-10s6 4 7 10z" fill="#5a3422" /></svg>
      </TaskSlot>
      <TaskSlot>
        <svg width="17" height="25" viewBox="0 0 17 25"><path d="M.5.500h12l4 4v20H.5z" fill="#f4f4f4" stroke="#aaa" /></svg>
      </TaskSlot>
      <TaskSlot running>
        <svg width="24" height="28" viewBox="0 0 24 28"><path d="M1 1h16l3 3v24H1z" fill="#e8f0e0" /><path d="M1 15h19v13H1z" fill="#6dbb45" /><path d="M5 9v8M8 9v8M11 12h3" stroke="#222" strokeWidth="1.500" /><path d="M22 1l2 1-8 16-3 2 1-4z" fill="#c79a3a" /></svg>
      </TaskSlot>
      <TaskSlot>
        <svg width="24" height="26" viewBox="0 0 24 26" fill="#17e6e6"><path d="M7 8c0-10 10-10 10 0h3l-3 5H7L4 8z" /><path d="M0 13c4 0 8 3 10 8l-3 4c-4-2-7-6-7-12zM24 13c-4 0-8 3-10 8l3 4c4-2 7-6 7-12z" /><circle cx="12" cy="9" r="4" fill="#02040a" /></svg>
      </TaskSlot>
      <TaskSlot>
        <svg width="24" height="24" viewBox="0 0 24 24"><defs><linearGradient id="acadg" x1="0" y1="0" x2="0" y2="1"><stop offset="0" stopColor="#e33" /><stop offset="1" stopColor="#f7a0a0" /></linearGradient></defs><rect width="24" height="24" fill="url(#acadg)" /><path d="M12 3l7 15h-4l-3-4-3 4H5z" fill="#7a0a0a" /></svg>
      </TaskSlot>
      <TaskSlot running>
        <svg width="24" height="26" viewBox="0 0 24 26"><circle cx="12" cy="12" r="11.500" fill="#2a6db5" /><circle cx="12" cy="12" r="6" fill="none" stroke="#fff" strokeWidth="1.600" /><path d="M15 17l3 3" stroke="#fff" strokeWidth="1.600" /></svg>
      </TaskSlot>
      <TaskSlot>
        <div className="w-[22px] h-[24px] bg-[#001e36] border border-[#7aa7d9] text-[#7ab8f0] text-[13px] font-bold flex items-center justify-center">Ps</div>
      </TaskSlot>
      <TaskSlot>
        <svg width="24" height="26" viewBox="0 0 24 26"><path d="M6 2l17 3-3 20L1 21z" fill="#cfe3ea" /><path d="M6 2L1 21l5 2 3-19z" fill="#6f8d99" /></svg>
      </TaskSlot>
      <TaskSlot>
        <svg width="18" height="28" viewBox="0 0 18 28"><rect width="18" height="28" fill="#fff" /><rect x="2" y="2" width="14" height="5" fill="#111" /><path d="M3 10h3v3H3zM8 10h3v3H8zM13 10h3v3h-3zM3 16h3v3H3zM8 16h3v3H8zM13 16h3v3h-3zM3 22h3v3H3zM8 22h3v3H8zM13 22h3v3h-3z" fill="#111" /></svg>
      </TaskSlot>
      <TaskSlot>
        <svg width="26" height="28" viewBox="0 0 26 28"><path d="M2 15C2 8 8 5 14 6c5 1 7 5 6 9-1 4-6 2-7 5s-2 5-5 4-6-4-6-9z" fill="#dfe7ef" /><circle cx="8" cy="12" r="1.800" fill="#d33" /><circle cx="13" cy="10" r="1.800" fill="#3a3" /><circle cx="7" cy="17" r="1.800" fill="#36c" /><path d="M24 1L12 27" stroke="#c79a5a" strokeWidth="2" /></svg>
      </TaskSlot>
      <TaskSlot>
        <svg width="24" height="28" viewBox="0 0 24 28" fill="#17e6e6"><path d="M7 9C7-1 17-1 17 9h3l-3 5H7L4 9z" /><path d="M0 13c4 0 12 1 12 14-7-1-12-6-12-14zM24 13c-4 0-12 1-12 14 7-1 12-6 12-14z" /><rect x="8" y="7" width="8" height="3" fill="#02040a" /></svg>
      </TaskSlot>
      <TaskSlot>
        <div className="w-[24px] h-[24px] bg-[#a50000] text-white text-[17px] font-bold italic flex items-center justify-center">Fz</div>
      </TaskSlot>
      <TaskSlot running>
        <div className="w-[24px] h-[24px] bg-[#f7e3dc] text-[#b3202c] text-[21px] font-bold flex items-center justify-center leading-none">A</div>
      </TaskSlot>
      <div className="ml-auto flex items-center h-full">
        <svg width="13" height="8" viewBox="0 0 13 8" fill="none" stroke="#fff" strokeWidth="1.300"><path d="M1 7l5.500-6L12 7" /></svg>
        <div className="ml-[11px] w-[16px] h-[19px] bg-[#d0121f] flex items-center justify-center">
          <svg width="12" height="12" viewBox="0 0 12 12" fill="none" stroke="#fff" strokeWidth="1.800"><path d="M2 11L6 2c1-1.500 2.500-1 2.500 .5S6 6 4 6c3 0 4 2 6 3.500" /></svg>
        </div>
        <svg className="ml-[8px]" width="16" height="16" viewBox="0 0 16 16" fill="none" stroke="#fff"><path d="M1 5.500h2L7 2v12l-4-3.500H1zM9.500 5c1 2 1 4 0 6M12 3c2 3 2 7 0 10M14 1.500c2.500 4 2.500 9 0 13" /></svg>
        <svg className="ml-[7px]" width="16" height="16" viewBox="0 0 16 16" fill="none" stroke="#fff"><path d="M.5.500h9v3h6V11h-7v-2M.5.500V8h8" /><path d="M9 11v3M5 14.500h8" /></svg>
        <div className="ml-[5px] w-[36px] text-center text-[12px] leading-[18px]">БГР<br />BGPT</div>
        <svg className="ml-[12px]" width="16" height="16" viewBox="0 0 16 16" fill="none" stroke="#fff" strokeWidth="1.200"><path d="M.6.600h14.800V12.500h-4.500L8 15l-2.900-2.500H.6z" /></svg>
        <div className="w-[25px]" />
      </div>
    </div>
  );
}

function Annotations() {
  return (
    <>
      <svg className="absolute left-0 top-0 pointer-events-none" width="1920" height="1080" viewBox="0 0 1920 1080">
        <path d="M558 186L636 178 627 199 1199 397 1195 412 620 220 614 239z" fill="#c44e5a" />
        <circle cx="1220.500" cy="414" r="20.500" fill="#fff" stroke="#c44e5a" strokeWidth="13" />
        <text x="1220.500" y="421" textAnchor="middle" fontSize="19" fontWeight="300" fontFamily="Lato, Roboto, sans-serif" fill="#c44e5a">2</text>
        <path d="M510 590L543 603 532 610 647 782 638 787 522 619 511 626z" fill="#c44e5a" />
        <circle cx="656" cy="804" r="18.200" fill="#fff" stroke="#c44e5a" strokeWidth="8.500" />
        <text x="655" y="811" textAnchor="middle" fontSize="19" fontWeight="300" fontFamily="Lato, Roboto, sans-serif" fill="#c44e5a">1</text>
      </svg>
      <div className="absolute left-[1221px] top-[498px] origin-left scale-x-[0.79] text-[39px] leading-[46px] text-[#c44e5a] whitespace-nowrap font-['Noto_Sans',sans-serif]">текста е без формула.</div>
    </>
  );
}

export default function App() {
  return (
    <div className="relative w-[1920px] h-[1080px] overflow-hidden flex flex-col font-['Noto_Sans',sans-serif] text-[11.500px]">
      <TitleBar />
      <Ribbon />
      <FormulaBar />
      <Sheet />
      <SheetTabs />
      <StatusBar />
      <Taskbar />
      <Annotations />
    </div>
  );
}
